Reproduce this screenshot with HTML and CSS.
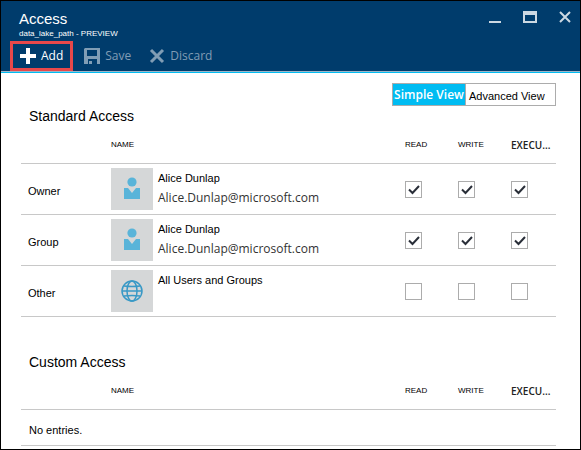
FILE: index.html
```html
<!DOCTYPE html>
<html lang="en">
<head>
<meta charset="utf-8">
<title>Access</title>
<link rel="stylesheet" href="styles.css">
</head>
<body>
<svg class="defs" aria-hidden="true">
  <symbol id="person" viewBox="0 0 18 24">
    <circle cx="9" cy="5" r="4.6"/>
    <path d="M1 11h4l4 5 4-5h4v11H1z"/>
  </symbol>
</svg>
<div class="blade">
  <header class="header">
    <div class="titlebar">
      <div class="titles">
        <h1>Access</h1>
        <p>data_lake_path - PREVIEW</p>
      </div>
      <div class="window-controls">
        <button type="button" aria-label="Minimize"><svg viewBox="0 0 14 14"><path d="M1 12h12" stroke-width="2"/></svg></button>
        <button type="button" aria-label="Maximize"><svg viewBox="0 0 14 14"><path d="M1 2v10h12V2" stroke-width="2"/><path d="M0 3h14" stroke-width="4"/></svg></button>
        <button type="button" aria-label="Close"><svg viewBox="0 0 14 14"><path d="M2 2l10 10M12 2L2 12" stroke-width="2"/></svg></button>
      </div>
    </div>
    <div class="toolbar">
      <button type="button" class="command add"><svg viewBox="0 0 16 16"><path d="M6 0h4v6h6v4h-6v6H6v-6H0V6h6z"/></svg>Add</button>
      <button type="button" class="command save" disabled><svg viewBox="0 0 16 16"><path fill-rule="evenodd" d="M0 1l1-1h15v16h-3v-5H4v5H0zM3 2v6h10V2z"/><path d="M5 13h3v3H5z"/></svg>Save</button>
      <button type="button" class="command discard" disabled><svg viewBox="0 0 16 16"><path d="M2 2l12 12M14 2L2 14" stroke="currentColor" stroke-width="3"/></svg>Discard</button>
    </div>
  </header>
  <main class="content">
    <div class="view-switch">
      <button type="button" class="simple" aria-pressed="true">Simple View</button>
      <button type="button" class="advanced" aria-pressed="false">Advanced View</button>
    </div>
    <section class="standard">
      <h2>Standard Access</h2>
      <table>
        <colgroup><col class="c-role"><col><col class="c-perm"><col class="c-perm"><col class="c-exec"></colgroup>
        <thead><tr><th></th><th>NAME</th><th>READ</th><th>WRITE</th><th class="exec">EXECU...</th></tr></thead>
        <tbody>
          <tr>
            <th scope="row">Owner</th>
            <td><div class="identity"><span class="avatar"><svg class="person"><use href="#person"/></svg></span><div><p>Alice Dunlap</p><p class="mail">Alice.Dunlap@microsoft.com</p></div></div></td>
            <td><input type="checkbox" aria-label="Owner read" checked></td>
            <td><input type="checkbox" aria-label="Owner write" checked></td>
            <td><input type="checkbox" aria-label="Owner execute" checked></td>
          </tr>
          <tr>
            <th scope="row">Group</th>
            <td><div class="identity"><span class="avatar"><svg class="person"><use href="#person"/></svg></span><div><p>Alice Dunlap</p><p class="mail">Alice.Dunlap@microsoft.com</p></div></div></td>
            <td><input type="checkbox" aria-label="Group read" checked></td>
            <td><input type="checkbox" aria-label="Group write" checked></td>
            <td><input type="checkbox" aria-label="Group execute" checked></td>
          </tr>
          <tr>
            <th scope="row">Other</th>
            <td><div class="identity"><span class="avatar"><svg class="globe" viewBox="0 0 22 22"><circle cx="11" cy="11" r="10"/><ellipse cx="11" cy="11" rx="5" ry="10"/><path d="M1 11h20M3 6q8 1 16 0M3 16q8-1 16 0"/></svg></span><div><p>All Users and Groups</p></div></div></td>
            <td><input type="checkbox" aria-label="Other read"></td>
            <td><input type="checkbox" aria-label="Other write"></td>
            <td><input type="checkbox" aria-label="Other execute"></td>
          </tr>
        </tbody>
      </table>
    </section>
    <section class="custom">
      <h2>Custom Access</h2>
      <table>
        <colgroup><col class="c-role"><col><col class="c-perm"><col class="c-perm"><col class="c-exec"></colgroup>
        <thead><tr><th></th><th>NAME</th><th>READ</th><th>WRITE</th><th class="exec">EXECU...</th></tr></thead>
        <tbody><tr class="empty"><td colspan="5">No entries.</td></tr></tbody>
      </table>
    </section>
  </main>
</div>
</body>
</html>
```
FILE: styles.css
```css
* {
  box-sizing: border-box;
}

body,
h1,
h2,
p {
  margin: 0;
  font-weight: normal;
}

body {
  font: 11px/16px "Liberation Sans", Arial, sans-serif;
  color: #000;
}

button {
  margin: 0;
  padding: 0;
  border: 0;
  background: none;
  font: 12px/16px "Open Sans", "Noto Sans", sans-serif;
  color: inherit;
}

.defs {
  display: none;
}

.blade {
  min-height: 100vh;
  border: 1px solid #000;
  background: #fff;
}

.header {
  background: #003c6c;
  border-bottom: 1px solid #00bcf2;
  box-shadow: inset 0 -1px #9fb4c6;
  color: #fff;
}

.titlebar {
  display: flex;
  justify-content: space-between;
  height: 40px;
  padding: 9px 8px 0 18px;
}

h1 {
  font-size: 15px;
  line-height: 18px;
}

.titles p {
  font-size: 8px;
  line-height: 12px;
}

.window-controls {
  display: flex;
  align-items: flex-start;
  gap: 21px;
}

.window-controls button {
  display: flex;
}

.window-controls svg {
  width: 14px;
  height: 14px;
  fill: none;
  stroke: #ccd8e2;
}

.toolbar {
  display: flex;
  height: 31px;
  padding-left: 9px;
}

.command {
  display: flex;
  align-items: center;
  gap: 5px;
  height: 30px;
  padding: 0 7px;
}

.command svg {
  width: 16px;
  height: 16px;
  fill: currentColor;
}

.command:disabled {
  color: #809db5;
}

.add {
  border: 2px solid #e8484a;
  outline: 1px solid #e8484a;
  outline-offset: -3px;
  padding: 0 8px;
}

.save {
  margin-left: 4px;
}

.discard {
  margin-left: 4px;
}

.content {
  padding: 10px 24px 0 20px;
}

.view-switch {
  display: flex;
  justify-content: flex-end;
}

.view-switch button {
  height: 23px;
  border: 1px solid #acacac;
}

.view-switch .simple {
  width: 74px;
  background: #00bcf2;
  color: #fff;
  font-weight: 600;
}

.view-switch .advanced {
  width: 91px;
  margin-left: -1px;
  padding: 2px 0 0 3px;
  text-align: left;
  font: 11px/16px "Liberation Sans", Arial, sans-serif;
}

h2 {
  padding-left: 8px;
  font-size: 14px;
  line-height: 20px;
}

.custom {
  margin-top: 35px;
}

table {
  width: 100%;
  table-layout: fixed;
  border-collapse: separate;
  border-spacing: 0;
}

.c-role {
  width: 90px;
}

.c-perm {
  width: 53px;
}

.c-exec {
  width: 45px;
}

th,
td {
  padding: 0;
  border-bottom: 1px solid #c8c8c8;
  font-weight: normal;
  text-align: left;
  vertical-align: middle;
}

thead th {
  height: 38px;
  font-size: 8px;
}

thead .exec {
  font: 600 10px/16px "Open Sans", "Noto Sans", sans-serif;
  color: #222;
}

tbody th {
  height: 51px;
  padding: 3px 0 0 7px;
}

.identity {
  display: flex;
  gap: 5px;
}

.identity p {
  line-height: 20px;
}

.identity .mail {
  font: 12px/20px "Open Sans", "Noto Sans", sans-serif;
  color: #333;
}

.avatar {
  display: grid;
  place-items: center;
  width: 42px;
  height: 42px;
  background: #d5d7d8;
}

.person {
  width: 18px;
  height: 24px;
  fill: #59b4d9;
}

.globe {
  width: 22px;
  height: 22px;
  fill: none;
  stroke: #3999c6;
  stroke-width: 1.5;
}

input {
  display: block;
  appearance: none;
  width: 17px;
  height: 17px;
  margin: 0;
  border: 1px solid #acacac;
  background: #fff;
}

input:checked {
  background: #fff url("data:image/svg+xml,%3Csvg xmlns='http://www.w3.org/2000/svg' viewBox='0 0 15 15'%3E%3Cpath d='M3 7.5l3.5 3.5L13 4' fill='none' stroke='%23292e38' stroke-width='2'/%3E%3C/svg%3E");
}

.empty td {
  height: 36px;
  padding: 4px 0 0 8px;
}
```
